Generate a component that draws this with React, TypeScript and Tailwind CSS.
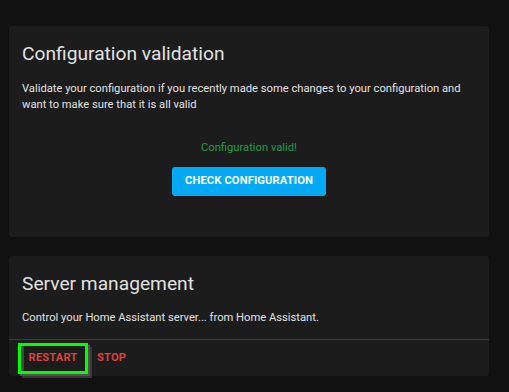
import React from 'react';

export default function App() {
    return (
        <div className="min-h-screen w-full bg-[#111111] pt-[26px] pl-[9px] pr-[20px] font-['Roboto',sans-serif] antialiased">
            {/* Configuration validation card */}
            <div className="bg-[#1c1c1c] rounded-[3px] px-[13px] pt-[15px] pb-[41px]">
                <h2 className="text-[19.2px] leading-[25.6px] text-[#e1e1e1] font-normal">
                    Configuration validation
                </h2>
                <p className="mt-[14px] text-[11.2px] leading-[16px] text-[#e1e1e1]">
                    Validate your configuration if you recently made some changes to your configuration and want to make sure that it is all valid
                </p>
                <div className="flex flex-col items-center">
                    <span className="mt-[27px] text-[11.2px] leading-[16px] text-[#1e9c4a]">
                        Configuration valid!
                    </span>
                    <button className="mt-[11px] h-[29px] px-[13px] rounded-[3px] bg-[#03a9f4] text-white text-[11.2px] font-bold uppercase tracking-[0.01em] shadow-[0_1px_2px_rgba(0,0,0,0.4)]">
                        Check configuration
                    </button>
                </div>
            </div>

            {/* Server management card */}
            <div className="mt-[19px] bg-[#1c1c1c] rounded-[3px]">
                <div className="px-[13px] pt-[15px] pb-[13px]">
                    <h2 className="text-[19.2px] leading-[25.6px] text-[#e1e1e1] font-normal">
                        Server management
                    </h2>
                    <p className="mt-[14px] text-[11.2px] leading-[16px] text-[#e1e1e1]">
                        Control your Home Assistant server... from Home Assistant.
                    </p>
                </div>
                <div className="border-t border-[#3a3a3a] flex items-center pl-[9px] pt-[3px] pb-[2px]">
                    <button className="h-[31px] w-[70px] border-[3px] border-[#00ff00] text-[#d8453a] text-[11.2px] font-bold uppercase tracking-[0.01em] shadow-[inset_3px_0_0_#454545,2px_2px_0_#4f4f4f,4px_4px_0_#383838]">
                        Restart
                    </button>
                    <button className="ml-[9px] h-[31px] text-[#d8453a] text-[11.2px] font-bold uppercase tracking-[0.01em]">
                        Stop
                    </button>
                </div>
            </div>
        </div>
    );
}
